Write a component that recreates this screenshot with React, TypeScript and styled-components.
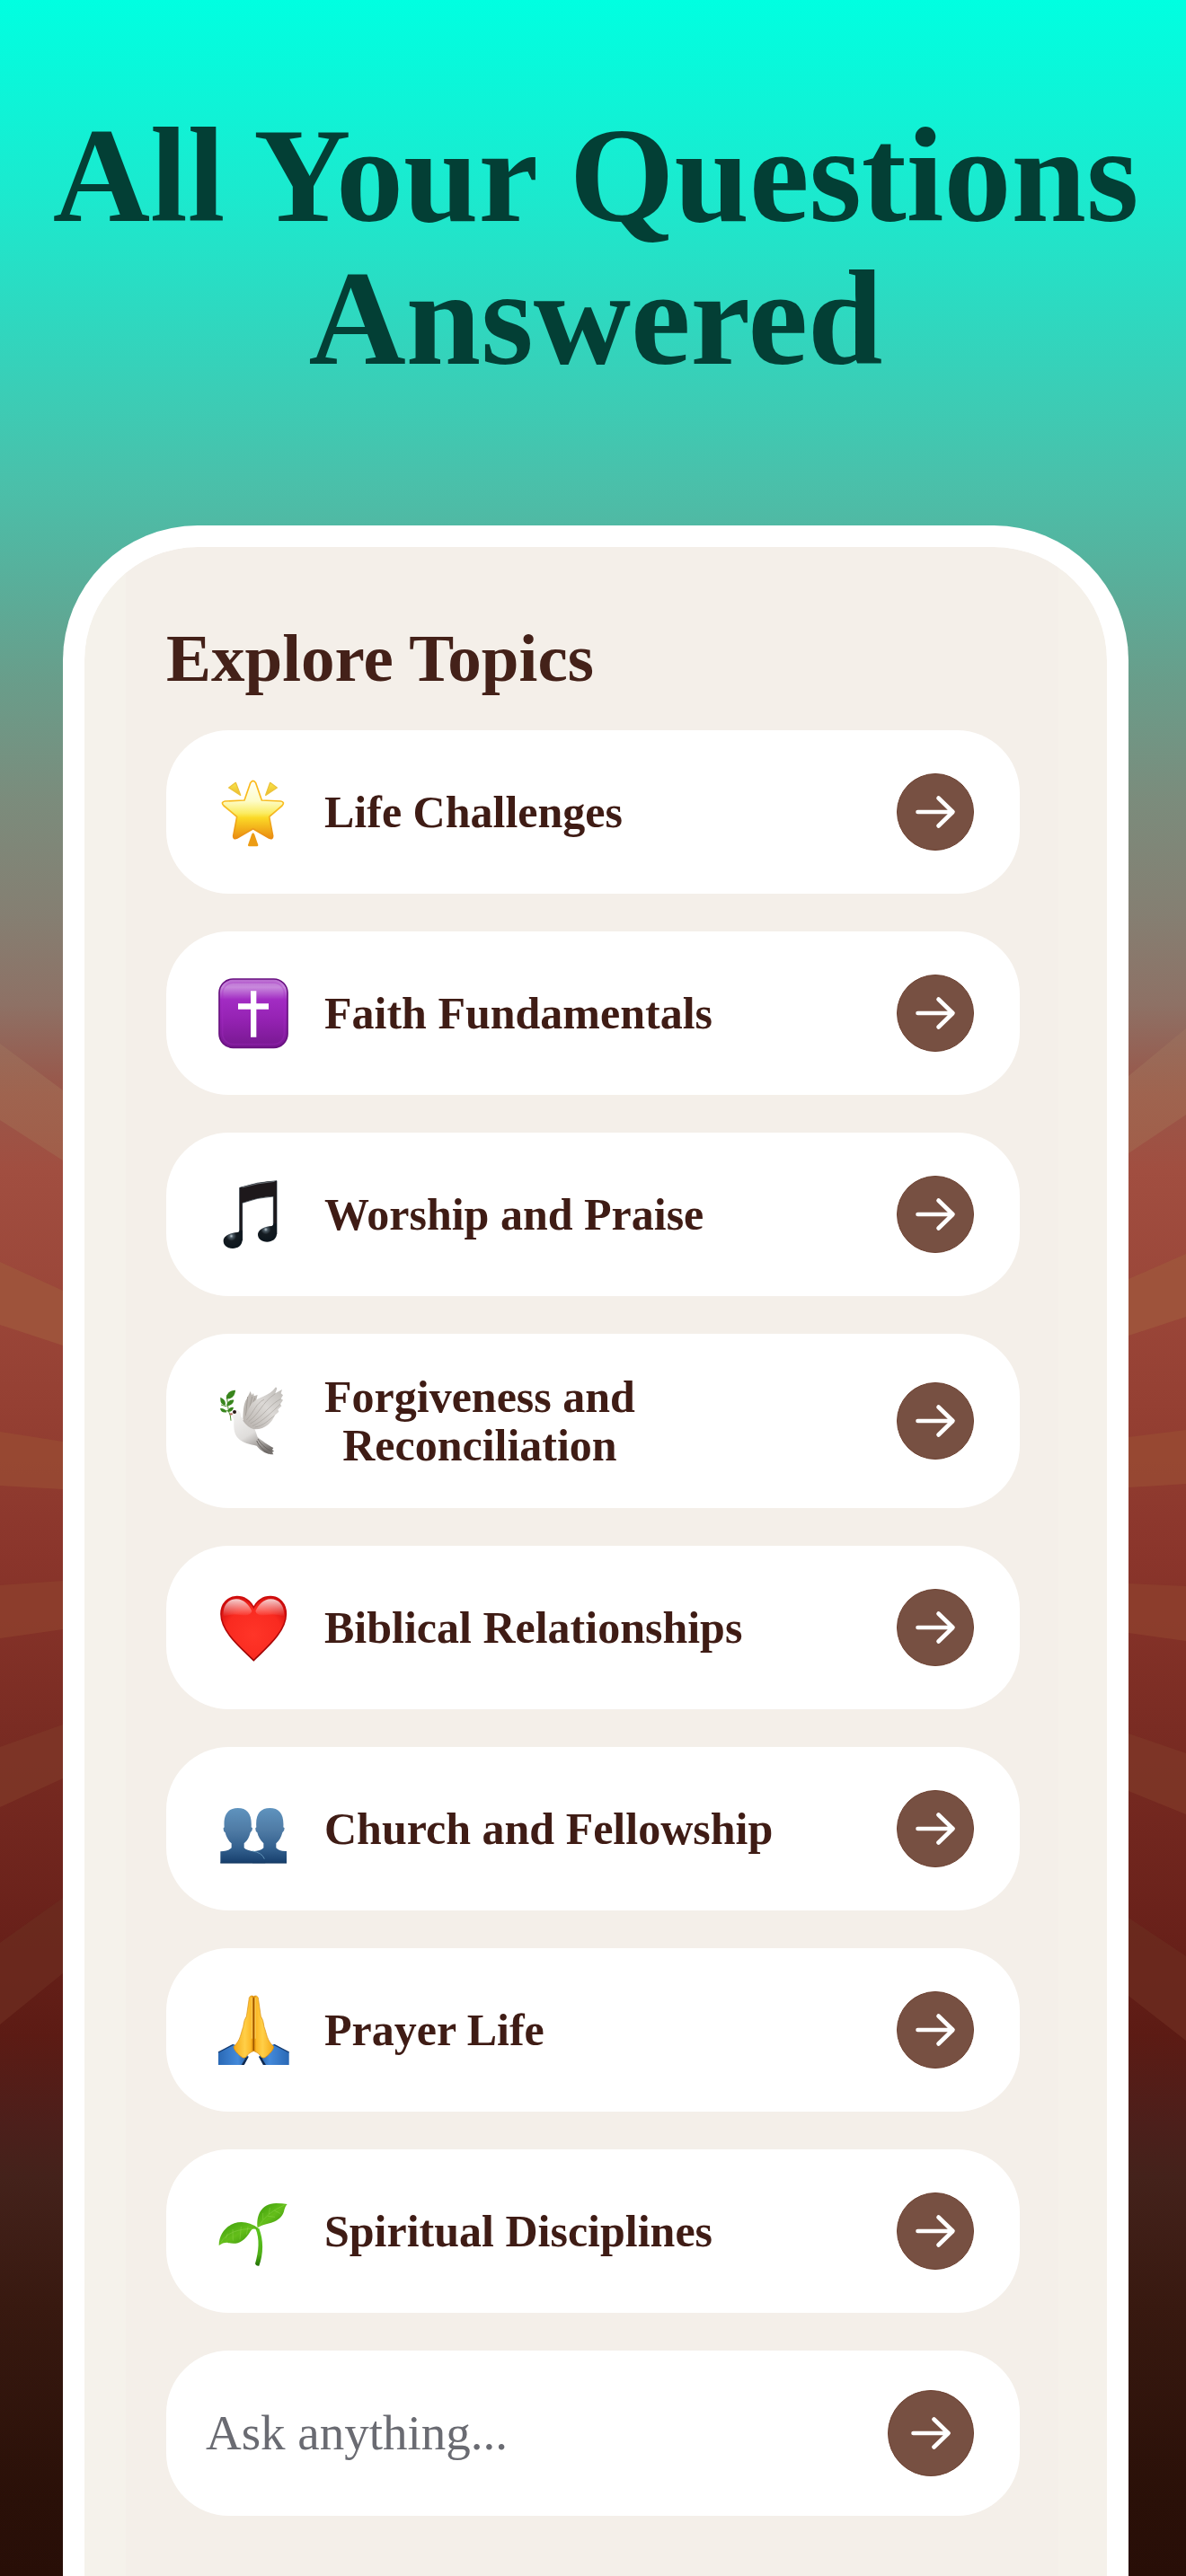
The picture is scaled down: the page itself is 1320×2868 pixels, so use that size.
import React from "react";
import styled, { createGlobalStyle } from "styled-components";

const GlobalStyle = createGlobalStyle`
  *, *::before, *::after { box-sizing: border-box; }
  body {
    margin: 0;
    font-family: "Liberation Serif", "Times New Roman", serif;
  }
`;

const Page = styled.div`
  position: relative;
  isolation: isolate;
  display: flex;
  flex-direction: column;
  min-height: 100vh;
  background: linear-gradient(
    180deg,
    #00ffe1 0%,
    #1de8cd 8%,
    #33d4bc 13.5%,
    #4bbfa9 19%,
    #52b6a1 21%,
    #699d8a 26.5%,
    #7b8c7c 31%,
    #857f72 35.5%,
    #8e7165 39%,
    #98584b 42%,
    #a14e40 45.5%,
    #954033 54.5%,
    #8a352b 60.5%,
    #7a2c23 67%,
    #69211a 75%,
    #5c1b14 79%,
    #4c1f1b 82.5%,
    #44221b 84.5%,
    #381910 89.5%,
    #2a1008 97%,
    #280e07 100%
  );
`;

const Sunburst = styled.svg`
  position: absolute;
  inset: 0;
  z-index: -1;
  width: 100%;
  height: 100%;
`;

const Hero = styled.header`
  padding: 116px 20px 151px 26px;
`;

const Title = styled.h1`
  margin: 0;
  color: #033f35;
  font-size: 150px;
  line-height: 159px;
  font-weight: 700;
  text-align: center;
`;

const Panel = styled.main`
  flex: 1;
  margin: 0 64px 0 70px;
  padding: 84px 97px 67px 91px;
  border: 24px solid #ffffff;
  border-bottom: 0;
  border-radius: 150px 150px 0 0;
  background:
    linear-gradient(
        90deg,
        #f5f2eb 46px,
        #f4efe9 46px,
        #f4efe9 calc(100% - 54px),
        #f5f1ea calc(100% - 54px)
      )
      padding-box,
    linear-gradient(#ffffff, #ffffff) border-box;
`;

const PanelTitle = styled.h2`
  margin: 0 0 40px;
  color: #442119;
  font-size: 75px;
  line-height: 80px;
  font-weight: 700;
`;

const TopicList = styled.ul`
  display: flex;
  flex-direction: column;
  gap: 42px;
  margin: 0 0 42px;
  padding: 0;
  list-style: none;
`;

const TopicCard = styled.button`
  display: flex;
  align-items: center;
  gap: 40px;
  width: 100%;
  min-height: 182px;
  padding: 43px 51px 43px 58px;
  border: 0;
  border-radius: 70px;
  background: #ffffff;
  color: #3f1c15;
  font: 700 50px/54px "Liberation Serif", "Times New Roman", serif;
  cursor: pointer;
`;

const TopicIcon = styled.svg`
  flex: none;
  width: 78px;
  height: 78px;
  overflow: visible;
`;

const TopicLabel = styled.span`
  text-align: center;
  white-space: pre-line;
`;

const Circle = styled.span<{ $size: number }>`
  display: flex;
  flex: none;
  align-items: center;
  justify-content: center;
  width: ${(p) => p.$size}px;
  height: ${(p) => p.$size}px;
  margin-left: auto;
  padding: 0;
  border: 1px solid #6d4131;
  border-radius: 50%;
  background: #775042;
`;

const AskForm = styled.form`
  display: flex;
  align-items: center;
  gap: 24px;
  min-height: 184px;
  padding: 0 51px 0 44px;
  border-radius: 70px;
  background: #ffffff;
`;

const AskInput = styled.input`
  flex: 1;
  min-width: 0;
  padding: 0;
  border: 0;
  outline: 0;
  background: transparent;
  color: #3f1c15;
  font: 400 55px/64px "Liberation Serif", "Times New Roman", serif;

  &::placeholder {
    color: #6a6b72;
    opacity: 1;
  }
`;

const ArrowSvg = styled.svg`
  display: block;
  width: 46px;
  height: 40px;
`;

function Arrow() {
  return (
    <ArrowSvg viewBox="0 0 46 40" fill="none" aria-hidden="true">
      <path
        d="M3.500 20H42M26.500 4.500L42.500 20L26.500 35.500"
        stroke="#fff"
        strokeWidth="4.600"
        strokeLinecap="round"
        strokeLinejoin="round"
      />
    </ArrowSvg>
  );
}

const Star = (
  <>
    <defs>
      <linearGradient id="starFill" x1="0" y1="0" x2="0" y2="1">
        <stop offset="0" stopColor="#fffff4" />
        <stop offset=".35" stopColor="#fdfcc8" />
        <stop offset=".56" stopColor="#fbec62" />
        <stop offset=".64" stopColor="#fbd927" />
        <stop offset="1" stopColor="#ea8b10" />
      </linearGradient>
      <linearGradient id="starEdge" x1="0" y1="0" x2="0" y2="1">
        <stop offset="0" stopColor="#fbb818" />
        <stop offset=".5" stopColor="#f7bd22" />
        <stop offset="1" stopColor="#e98c13" />
      </linearGradient>
      <linearGradient id="sparkFill" x1="0" y1="0" x2="0" y2="1">
        <stop offset="0" stopColor="#f8e64a" />
        <stop offset="1" stopColor="#ecb92c" />
      </linearGradient>
    </defs>
    <path
      d="M107 20Q116 6 125 20L145 78L209 81Q223 84 213 96L170 133L182 197Q182 210 169 204L116 173L63 204Q50 210 50 197L62 133L18 96Q7 84 22 81L87 78Z"
      fill="url(#starFill)"
      stroke="url(#starEdge)"
      strokeWidth="5"
      strokeLinejoin="round"
    />
    <g fill="url(#sparkFill)" stroke="#ecc33a" strokeWidth="4" strokeLinejoin="round">
      <path d="M35 36L58 19L74 61Z" />
      <path d="M196 36L173 19L158 61Z" />
    </g>
    <path d="M111 193Q116 180 121 193L133 227Q134 232 128 232H104Q98 232 99 227Z" fill="#ec9c14" />
  </>
);

const Cross = (
  <>
    <defs>
      <linearGradient id="crossFill" x1="0" y1="0" x2="0" y2="1">
        <stop offset="0" stopColor="#b868cf" />
        <stop offset=".12" stopColor="#c889dc" />
        <stop offset=".3" stopColor="#a22cc3" />
        <stop offset=".6" stopColor="#9422b2" />
        <stop offset="1" stopColor="#771890" />
      </linearGradient>
    </defs>
    <rect x="3" y="3" width="228" height="229" rx="46" fill="url(#crossFill)" stroke="#681080" strokeWidth="5" />
    <rect x="14" y="15" width="206" height="206" rx="36" fill="none" stroke="#a52cc4" strokeWidth="5" opacity=".3" />
    <path d="M108 43H127V85H168V104H127V197H108V104H66V85H108Z" fill="#fff" />
  </>
);

const Music = (
  <>
    <defs>
      <radialGradient id="noteHead" cx=".42" cy=".32" r=".6">
        <stop offset="0" stopColor="#c2ced6" />
        <stop offset=".17" stopColor="#4c5a64" />
        <stop offset=".45" stopColor="#141b21" />
        <stop offset="1" stopColor="#0d161d" />
      </radialGradient>
    </defs>
    <path
      d="M71 28Q130 8 195 5V183H184V57Q130 60 80 79V204H71Z"
      fill="#1d181b"
      stroke="#17232d"
      strokeWidth="2"
      strokeLinejoin="round"
    />
    <path d="M80 170V205C78 222 65 231 48 231C30 231 16 220 17 204C18 186 45 178 64 177Q71 176 71 170Z" fill="url(#noteHead)" />
    <path d="M195 148V184C193 200 180 209 163 209C145 209 131 198 132 183C134 166 157 157 178 156Q184 154 184 148Z" fill="url(#noteHead)" />
    <path d="M80 27Q130 12 188 7" stroke="#8e969b" strokeWidth="2" fill="none" />
  </>
);

const Dove = (
  <>
    <defs>
      <linearGradient id="doveBody" x1=".1" y1="0" x2=".7" y2="1">
        <stop offset="0" stopColor="#f4f3f2" />
        <stop offset=".55" stopColor="#dfdddb" />
        <stop offset=".8" stopColor="#a8a4a1" />
        <stop offset="1" stopColor="#76716e" />
      </linearGradient>
      <linearGradient id="doveWing" x1="1" y1="0" x2="0" y2="1">
        <stop offset="0" stopColor="#bdbab6" />
        <stop offset=".45" stopColor="#dcd9d6" />
        <stop offset="1" stopColor="#b2aca7" />
      </linearGradient>
    </defs>
    <path d="M82 116C83 90 83 60 95 43L107 18L112 31L117 24L119 34L131 30L126 50L119 75L96 122Z" fill="#bdb8b3" />
    <path d="M98 36L91 105M113 36L96 108M122 40L101 108" stroke="#9d9792" strokeWidth="2.500" fill="none" />
    <path
      d="M41 93Q49 80 61 81C73 82 75 93 75 101C84 119 115 128 123 148L131 171C144 182 165 198 184 207L180 213L186 218L180 221L184 229C162 229 144 219 128 200C106 195 83 193 66 175C51 160 51 135 52 115Q49 105 45 96Z"
      fill="url(#doveBody)"
    />
    <path
      d="M82 116C98 92 97 75 114 56C136 36 167 37 192 4L196 8L190 25L213 12L209 25L216 31L209 43L216 47L207 61L211 67L199 79L202 86L188 99C181 120 156 147 119 145Q98 139 82 116Z"
      fill="url(#doveWing)"
    />
    <path
      d="M101 119C137 94 145 56 190 26M107 126C149 104 172 61 208 44M114 134C147 119 178 88 207 61M122 138C150 134 169 113 188 99M94 114C123 82 123 61 153 45"
      stroke="#a39e99"
      strokeWidth="2.500"
      fill="none"
      opacity=".75"
    />
    <path d="M132 177Q145 201 176 218M128 183Q138 207 167 225" stroke="#696461" strokeWidth="3" fill="none" />
    <path d="M28 31L34 84Q42 98 42 116M29 69L9 63M33 83L14 84M30 68L43 58M35 84L46 79" stroke="#4e8e2c" strokeWidth="3" fill="none" />
    <g fill="#38851d">
      <path d="M26 43C28 21 43 14 57 14C56 34 43 45 26 43Z" />
      <path d="M7 38C23 45 25 54 23 65C9 62 6 52 7 38Z" />
      <path d="M27 65C31 50 41 45 52 47C50 60 40 67 27 65Z" />
      <path d="M6 75C20 75 25 80 28 88C16 91 8 86 6 75Z" />
      <path d="M31 86C34 74 41 70 51 72C49 82 42 88 31 86Z" />
    </g>
    <path d="M37 94Q40 89 46 91L48 96L40 98Z" fill="#aa6957" />
    <circle cx="54" cy="87" r="6" fill="#271712" />
  </>
);

const Heart = (
  <>
    <defs>
      <radialGradient id="heartFill" cx=".5" cy=".6" r=".66">
        <stop offset="0" stopColor="#ff3528" />
        <stop offset=".65" stopColor="#f92a20" />
        <stop offset="1" stopColor="#d10b0b" />
      </radialGradient>
      <linearGradient id="heartShine" x1="0" y1="0" x2="0" y2="1">
        <stop offset="0" stopColor="#fff" stopOpacity=".8" />
        <stop offset="1" stopColor="#fff" stopOpacity="0" />
      </linearGradient>
      <linearGradient id="heartEdge" x1="0" y1="0" x2="0" y2="1">
        <stop offset="0" stopColor="#cf0d0d" />
        <stop offset="1" stopColor="#990505" />
      </linearGradient>
    </defs>
    <path
      d="M118 227C82 190 9 134 9 72C9 38 32 14 62 14C88 14 107 29 118 50C129 29 148 14 174 14C204 14 226 38 226 72C226 134 154 190 118 227Z"
      fill="url(#heartFill)"
      stroke="url(#heartEdge)"
      strokeWidth="5"
    />
    <path
      d="M17 80C14 44 33 22 60 22C86 22 102 43 112 62Q108 78 80 76Q44 70 17 80ZM219 80C222 44 203 22 175 22C150 22 134 43 124 62Q128 78 156 76Q192 70 219 80Z"
      fill="url(#heartShine)"
    />
  </>
);

const People = (
  <>
    <defs>
      <linearGradient id="peopleFill" gradientUnits="userSpaceOnUse" x1="0" y1="48" x2="0" y2="232">
        <stop offset="0" stopColor="#5f93be" />
        <stop offset=".4" stopColor="#4f7ba5" />
        <stop offset=".75" stopColor="#315e8c" />
        <stop offset="1" stopColor="#163e6c" />
      </linearGradient>
    </defs>
    <path
      d="M114 232V193Q143 191 151 181V166C140 155 133 143 130 130Q123 125 124 115L127 112C123 69 140 48 172 48C204 48 220 69 217 112L221 115Q221 126 214 130C210 144 204 157 193 166V181Q202 193 228 192V232Z"
      fill="url(#peopleFill)"
    />
    <path
      d="M7 232V193Q35 191 44 181V166C32 155 26 143 23 130Q16 125 17 115L20 112C16 69 33 48 65 48C97 48 113 69 110 112L114 115Q114 126 107 130C103 144 98 157 86 166V181Q94 190 122 193Q148 197 157 232Z"
      fill="url(#peopleFill)"
    />
    <path d="M114 192Q145 196 154 218" stroke="#6194b9" strokeWidth="3" fill="none" />
    <path d="M7 231H228" stroke="#12375f" strokeWidth="3" />
  </>
);

const Hands = (
  <>
    <defs>
      <linearGradient id="handLeft" x1="0" y1="0" x2="1" y2="0">
        <stop offset="0" stopColor="#f4a815" />
        <stop offset=".55" stopColor="#ffcf48" />
        <stop offset=".85" stopColor="#fcb927" />
        <stop offset="1" stopColor="#c97700" />
      </linearGradient>
      <linearGradient id="sleeve" x1="0" y1="0" x2="1" y2="0">
        <stop offset="0" stopColor="#2a69b5" />
        <stop offset=".65" stopColor="#4389da" />
        <stop offset="1" stopColor="#285e9f" />
      </linearGradient>
      <g id="handHalf">
        <path d="M0 191L52 164L101 206L86 234H0Z" fill="url(#sleeve)" />
        <path d="M49 166Q57 193 88 211L101 206L86 234H77L90 213Q58 199 49 166Z" fill="#10294e" />
        <path d="M0 192L50 166" stroke="#173c70" strokeWidth="4" />
        <path
          d="M102 17Q102 3 113 3Q119 3 119 12V187Q109 191 102 196L91 209Q83 214 73 204Q52 186 51 173C75 151 74 130 83 107Q86 81 94 72Z"
          fill="url(#handLeft)"
          stroke="#d98b09"
          strokeWidth="2"
        />
        <path d="M112 9V146" stroke="#ffe17a" strokeWidth="4" opacity=".55" />
      </g>
    </defs>
    <use href="#handHalf" />
    <use href="#handHalf" transform="matrix(-1 0 0 1 236 0)" />
    <path d="M118 10V186" stroke="#9b5300" strokeWidth="4" />
  </>
);

const Seedling = (
  <>
    <defs>
      <linearGradient id="leafFill" x1="0" y1="0" x2="1" y2="1">
        <stop offset="0" stopColor="#3a9b0b" />
        <stop offset=".5" stopColor="#64be1a" />
        <stop offset="1" stopColor="#318c06" />
      </linearGradient>
      <linearGradient id="stemFill" x1="0" y1="0" x2="0" y2="1">
        <stop offset="0" stopColor="#5bc51f" />
        <stop offset=".7" stopColor="#4faf16" />
        <stop offset="1" stopColor="#226f06" />
      </linearGradient>
    </defs>
    <path d="M124 108C139 143 135 185 123 226Q125 235 136 233C151 193 151 146 136 108Z" fill="url(#stemFill)" />
    <path d="M2 165C2 117 41 86 78 87Q106 87 133 107L128 113Q116 105 108 116C83 159 57 163 30 155Q14 155 2 165Z" fill="url(#leafFill)" />
    <path d="M131 106C126 67 142 24 193 24Q214 24 230 27Q222 35 219 52C207 91 160 91 142 100Z" fill="url(#leafFill)" />
    <path
      d="M7 158Q33 107 126 109M31 125L25 142M48 111L49 149M76 102L72 145M99 103L94 128M132 105Q161 54 221 30M149 79L149 57M169 60L172 39M165 67L189 70M187 48L208 59"
      fill="none"
      stroke="#a1df5c"
      strokeWidth="2"
      opacity=".5"
    />
  </>
);

const topics = [
  { label: "Life Challenges", icon: Star },
  { label: "Faith Fundamentals", icon: Cross },
  { label: "Worship and Praise", icon: Music },
  { label: "Forgiveness and\nReconciliation", icon: Dove },
  { label: "Biblical Relationships", icon: Heart },
  { label: "Church and Fellowship", icon: People },
  { label: "Prayer Life", icon: Hands },
  { label: "Spiritual Disciplines", icon: Seedling },
];

const rays = [
  { fill: "url(#rayFade)", d: "M0 1162L70 1214V1292L0 1247ZM1256 1198L1320 1145V1241L1256 1284Z" },
  { fill: "#9f563c", d: "M0 1405L70 1437V1498L0 1475ZM1256 1424L1320 1396V1466L1256 1487Z" },
  { fill: "#984a32", d: "M0 1594L70 1605V1658L0 1654ZM1256 1600L1320 1592V1652L1256 1656Z" },
  { fill: "#8d402d", d: "M0 1765L70 1760V1814L0 1824ZM1256 1763L1320 1766V1827L1256 1818Z" },
  { fill: "#7e3627", d: "M0 1945L70 1920V1980L0 2012ZM1256 1930L1320 1952V2020L1256 1994Z" },
  { fill: "#6b2a1e", d: "M0 2163L70 2113V2197L0 2254ZM1256 2135L1320 2178V2272L1256 2222Z" },
];

export default function App() {
  return (
    <>
      <GlobalStyle />
      <Page>
        <Sunburst viewBox="0 0 1320 2868" preserveAspectRatio="none" aria-hidden="true">
          <defs>
            <linearGradient id="rayFade" x1="0" y1="0" x2="0" y2="1">
              <stop offset="0" stopColor="#976f5e" />
              <stop offset=".5" stopColor="#a06650" />
              <stop offset="1" stopColor="#a1604a" />
            </linearGradient>
          </defs>
          {rays.map((ray) => (
            <path key={ray.d} d={ray.d} fill={ray.fill} opacity="0.85" />
          ))}
        </Sunburst>
        <Hero>
          <Title>
            All Your Questions
            <br />
            Answered
          </Title>
        </Hero>
        <Panel>
          <PanelTitle>Explore Topics</PanelTitle>
          <TopicList>
            {topics.map(({ label, icon }) => (
              <li key={label}>
                <TopicCard type="button">
                  <TopicIcon viewBox="0 0 234 234" aria-hidden="true">
                    {icon}
                  </TopicIcon>
                  <TopicLabel>{label}</TopicLabel>
                  <Circle $size={86}>
                    <Arrow />
                  </Circle>
                </TopicCard>
              </li>
            ))}
          </TopicList>
          <AskForm onSubmit={(event) => event.preventDefault()}>
            <AskInput type="text" placeholder="Ask anything..." aria-label="Ask anything" />
            <Circle as="button" type="submit" aria-label="Send" $size={96}>
              <Arrow />
            </Circle>
          </AskForm>
        </Panel>
      </Page>
    </>
  );
}
